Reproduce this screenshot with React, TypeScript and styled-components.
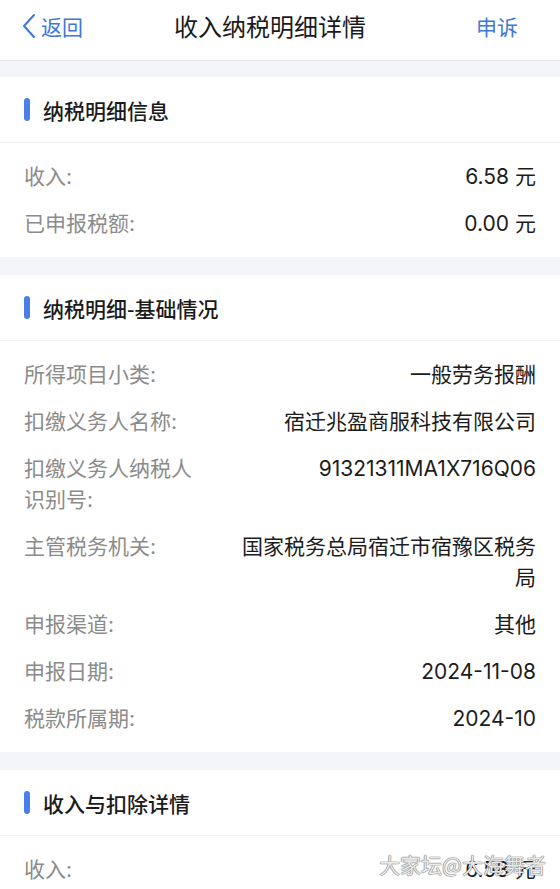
import React from "react";
import styled, { createGlobalStyle } from "styled-components";

const GlobalStyle = createGlobalStyle`
  body {
    margin: 0;
    background: #f4f5f8;
    font-family: "Inter", "Noto Sans CJK SC", sans-serif;
    -webkit-font-smoothing: antialiased;
  }
`;

const Page = styled.div`
  position: relative;
  width: 560px;
  height: 889px;
  overflow: hidden;
  background: #f4f5f8;
  display: flex;
  flex-direction: column;
`;

const NavBar = styled.div`
  height: 61px;
  box-sizing: border-box;
  flex-shrink: 0;
  background: #fff;
  border-bottom: 1px solid #e4e6ea;
  display: grid;
  grid-template-columns: 1fr auto 1fr;
  align-items: center;
  padding: 0 42px 8px 22px;
  margin-bottom: 16px;
`;

const BackLink = styled.div`
  display: flex;
  align-items: center;
  gap: 5px;
  color: #3c78d6;
  font-size: 21px;
  line-height: 28px;
  font-family: "Noto Sans CJK SC", sans-serif;
`;

const NavTitle = styled.div`
  font-size: 24px;
  line-height: 30px;
  color: #1a1a1a;
  font-family: "Noto Sans CJK SC", sans-serif;
  font-weight: 400;
`;

const NavAction = styled.div`
  justify-self: end;
  color: #3c78d6;
  font-size: 21px;
  line-height: 28px;
  font-family: "Noto Sans CJK SC", sans-serif;
`;

const Section = styled.section`
  background: #fff;
  margin-bottom: 18px;
  flex-shrink: 0;
`;

const SectionHead = styled.div`
  height: 65px;
  border-bottom: 1px solid #eceef1;
  display: flex;
  align-items: center;
  gap: 13px;
  padding: 0 24px;
`;

const Bar = styled.span`
  width: 6px;
  height: 23px;
  border-radius: 3px;
  background: #4a7ee8;
`;

const HeadText = styled.span`
  font-size: 21px;
  font-weight: 500;
  color: #1b1b1b;
  font-family: "Noto Sans CJK SC", sans-serif;
`;

const Body = styled.div`
  padding: 10px 24px 10px;
`;

const Row = styled.div`
  display: grid;
  grid-template-columns: 176px 1fr;
  column-gap: 30px;
  padding: 8px 0;
  font-size: 21px;
  line-height: 31px;
`;

const Label = styled.div`
  color: #8b8b8b;
`;

const Value = styled.div`
  color: #1c1c1c;
  text-align: right;
`;

const Watermark = styled.div`
  position: absolute;
  right: 14px;
  bottom: 10px;
  font-size: 21px;
  font-family: "Noto Sans CJK SC", sans-serif;
  color: rgba(255, 255, 255, 0.85);
  text-shadow: 0 0 1px #777, 0 0 1px #777, 0 0 1px #777;
`;

const ChevronLeft = () => (
  <svg width="14" height="26" viewBox="0 0 14 26" fill="none">
    <path d="M12 2 L2 13 L12 24" stroke="#3c78d6" strokeWidth="2" strokeLinecap="round" strokeLinejoin="round" />
  </svg>
);

const basic = [
  ["所得项目小类:", "一般劳务报酬"],
  ["扣缴义务人名称:", "宿迁兆盈商服科技有限公司"],
  ["扣缴义务人纳税人识别号:", "91321311MA1X716Q06"],
  ["主管税务机关:", "国家税务总局宿迁市宿豫区税务局"],
  ["申报渠道:", "其他"],
  ["申报日期:", "2024-11-08"],
  ["税款所属期:", "2024-10"],
];

export default function App() {
  return (
    <Page>
      <GlobalStyle />
      <NavBar>
        <BackLink>
          <ChevronLeft />
          返回
        </BackLink>
        <NavTitle>收入纳税明细详情</NavTitle>
        <NavAction>申诉</NavAction>
      </NavBar>

      <Section>
        <SectionHead>
          <Bar />
          <HeadText>纳税明细信息</HeadText>
        </SectionHead>
        <Body>
          <Row>
            <Label>收入:</Label>
            <Value>6.58 元</Value>
          </Row>
          <Row>
            <Label>已申报税额:</Label>
            <Value>0.00 元</Value>
          </Row>
        </Body>
      </Section>

      <Section>
        <SectionHead>
          <Bar />
          <HeadText>纳税明细-基础情况</HeadText>
        </SectionHead>
        <Body>
          {basic.map(([k, v]) => (
            <Row key={k}>
              <Label>{k}</Label>
              <Value>{v}</Value>
            </Row>
          ))}
        </Body>
      </Section>

      <Section>
        <SectionHead>
          <Bar />
          <HeadText>收入与扣除详情</HeadText>
        </SectionHead>
        <Body>
          <Row>
            <Label>收入:</Label>
            <Value>6.58 元</Value>
          </Row>
        </Body>
      </Section>

      <Watermark>大家坛@大海舞者</Watermark>
    </Page>
  );
}
